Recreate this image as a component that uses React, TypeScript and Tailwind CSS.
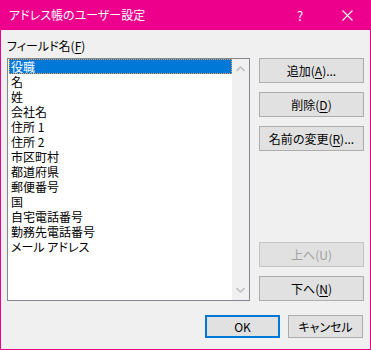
const font = {
  fontFamily: '"Noto Sans CJK JP", "Noto Sans", sans-serif',
};

const fields = [
  "役職",
  "名",
  "姓",
  "会社名",
  "住所 1",
  "住所 2",
  "市区町村",
  "都道府県",
  "郵便番号",
  "国",
  "自宅電話番号",
  "勤務先電話番号",
  "メール アドレス",
];

function Btn({
  children,
  disabled,
  className = "",
}: {
  children: React.ReactNode;
  disabled?: boolean;
  className?: string;
}) {
  return (
    <button
      className={
        "flex items-center justify-center border text-[12px] leading-none " +
        (disabled
          ? "bg-[#e1e1e1] border-[#c4c4c4] text-[#a0a0a0] "
          : "bg-[#e1e1e1] border-[#adadad] text-black ") +
        className
      }
    >
      {children}
    </button>
  );
}

export default function App() {
  return (
    <div
      className="w-[371px] h-[350px] border border-[#ec008c] flex flex-col [font-feature-settings:'palt']"
      style={font}
    >
      {/* Title bar */}
      <div className="h-[29px] bg-[#ec008c] flex items-center pl-[8px] text-white text-[12px]">
        <span className="flex-1 -mt-[1px]">アドレス帳のユーザー設定</span>
        <span className="w-[12px] text-center text-[13px] mr-[36px]">?</span>
        <svg width="11" height="11" viewBox="0 0 11 11" className="mr-[17px]">
          <path d="M0.5 0.5 L10.5 10.5 M10.5 0.5 L0.5 10.5" stroke="white" strokeWidth="1.1" />
        </svg>
      </div>

      {/* Body */}
      <div className="flex-1 bg-[#f0f0f0] px-[6px] pt-[8px] flex flex-col">
        <div className="h-[16px] mb-[4px] text-[12px] leading-[16px] text-black">
          フィールド名(<span className="underline underline-offset-2">F</span>)
        </div>

        <div className="flex gap-[9px]">
          {/* List box */}
          <div className="w-[243px] h-[243px] border border-[#828790] bg-white flex">
            <div className="flex-1 pl-[1px] flex flex-col">
              {fields.map((f, i) => (
                <div
                  key={f}
                  className={
                    "h-[15px] pl-[2px] text-[12px] leading-[15px] whitespace-nowrap " +
                    (i === 0
                      ? "bg-[#0078d7] text-white outline outline-1 outline-dotted -outline-offset-1 outline-[#f0a050]"
                      : "text-black")
                  }
                >
                  {f}
                </div>
              ))}
            </div>
            <div className="w-[17px] bg-[#f0f0f0] flex flex-col items-center justify-between py-[7px]">
              <svg width="9" height="6" viewBox="0 0 9 6">
                <path d="M0.5 5 L4.5 1 L8.5 5" fill="none" stroke="#c0c0c0" strokeWidth="1.6" />
              </svg>
              <svg width="9" height="6" viewBox="0 0 9 6">
                <path d="M0.5 1 L4.5 5 L8.5 1" fill="none" stroke="#c0c0c0" strokeWidth="1.6" />
              </svg>
            </div>
          </div>

          {/* Buttons */}
          <div className="w-[105px] flex flex-col justify-between">
            <div className="flex flex-col gap-[9px]">
              <Btn className="h-[25px]">
                追加(<span className="underline underline-offset-2">A</span>)...
              </Btn>
              <Btn className="h-[25px]">
                削除(<span className="underline underline-offset-2">D</span>)
              </Btn>
              <Btn className="h-[25px]">
                名前の変更(<span className="underline underline-offset-2">R</span>)...
              </Btn>
            </div>
            <div className="flex flex-col gap-[9px]">
              <Btn disabled className="h-[25px]">
                上へ(U)
              </Btn>
              <Btn className="h-[25px]">
                下へ(<span className="underline underline-offset-2">N</span>)
              </Btn>
            </div>
          </div>
        </div>

        {/* Footer */}
        <div className="flex justify-end gap-[8px] mt-[14px] pr-[1px]">
          <Btn className="w-[75px] h-[23px] !border-2 !border-[#0078d7]">OK</Btn>
          <Btn className="w-[75px] h-[23px]">キャンセル</Btn>
        </div>
      </div>
    </div>
  );
}
